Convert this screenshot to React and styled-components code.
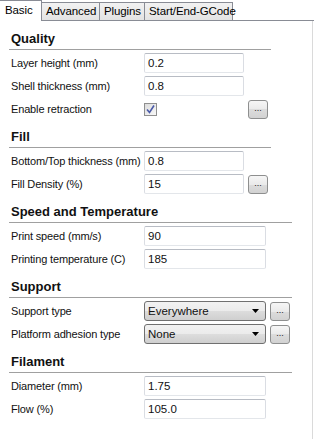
import styled, { createGlobalStyle } from "styled-components";

const Global = createGlobalStyle`
  body {
    margin: 0;
    background: #ffffff;
    font-family: "Liberation Sans", Arial, sans-serif;
    font-size: 11px;
    color: #000;
  }
`;

const Window = styled.div`
  width: 314px;
  height: 439px;
  background: #fff;
  overflow: hidden;
  display: flex;
  flex-direction: column;
`;

const TabBar = styled.div`
  display: flex;
  align-items: flex-end;
  height: 20px;
  border-bottom: 1px solid #898c95;
`;

const Tab = styled.div`
  box-sizing: border-box;
  width: ${(p) => p.w}px;
  height: ${(p) => (p.active ? 21 : 18)}px;
  margin-bottom: ${(p) => (p.active ? -1 : 0)}px;
  padding-left: ${(p) => (p.active ? 5 : 4)}px;
  line-height: ${(p) => (p.active ? 19 : 17)}px;
  background: ${(p) => (p.active ? "#fff" : "linear-gradient(#f2f2f2, #e3e3e3)")};
  border: 1px solid #898c95;
  border-left: ${(p) => (p.active ? "none" : "1px solid #898c95")};
  border-bottom: none;
  margin-left: ${(p) => (p.active ? 0 : -1)}px;
  font-size: 11.5px;
  letter-spacing: -0.1px;
  color: #000;
  white-space: nowrap;
  &:first-child {
    margin-left: 0;
  }
`;

const Panel = styled.div`
  flex: 1;
  padding-left: 9px;
  border-right: 1px solid #dadada;
  margin-right: 1px;
`;

const Section = styled.div`
  width: ${(p) => p.w}px;
  margin-top: 10px;
`;

const Header = styled.div`
  height: 18px;
  line-height: 16px;
  padding-left: 2px;
  font-size: 13px;
  font-weight: bold;
  color: #111;
  border-bottom: 1px solid #a0a0a0;
`;

const Rows = styled.div`
  display: flex;
  flex-direction: column;
  gap: 3px;
  margin-top: 3px;
`;

const Row = styled.div`
  display: flex;
  align-items: center;
  height: 20px;
`;

const Label = styled.div`
  box-sizing: border-box;
  width: 135px;
  padding-left: 2px;
  white-space: nowrap;
  font-size: 11px;
  letter-spacing: -0.15px;
  color: #111;
`;

const TextBox = styled.div`
  box-sizing: border-box;
  width: ${(p) => p.w}px;
  height: 20px;
  line-height: 18px;
  padding-left: 3px;
  border: 1px solid;
  border-color: #b8bcc4 #dadde3 #e3e6ea #dadde3;
  border-radius: 2px;
  background: #fff;
  font-size: 11.5px;
  color: #111;
`;

const Select = styled.div`
  box-sizing: border-box;
  width: 122px;
  height: 20px;
  line-height: 18px;
  padding-left: 3px;
  border: 1px solid #707070;
  border-radius: 3px;
  background: linear-gradient(#f2f2f2 0%, #ebebeb 50%, #dddddd 50%, #cfcfcf 100%);
  font-size: 11.5px;
  color: #111;
  display: flex;
  justify-content: space-between;
  align-items: center;
  padding-right: 6px;
`;

const MoreButton = styled.div`
  box-sizing: border-box;
  width: 20px;
  height: 19px;
  margin-left: 4px;
  border: 1px solid #8e8f8f;
  border-radius: 3px;
  background: linear-gradient(#f6f6f6 0%, #eaeaea 50%, #dcdcdc 50%, #d2d2d2 100%);
  font-size: 9px;
  line-height: 15px;
  text-align: center;
  color: #222;
`;

const CheckCell = styled.div`
  width: 100px;
  display: flex;
  align-items: center;
`;

const Box = styled.div`
  box-sizing: border-box;
  width: 13px;
  height: 13px;
  border: 1px solid #8f8f8f;
  background: linear-gradient(135deg, #dcdcdc, #f8f8f8);
  display: flex;
  align-items: center;
  justify-content: center;
`;

const Arrow = () => (
  <svg width="7" height="4" viewBox="0 0 7 4">
    <path d="M0 0 H7 L3.5 4 Z" fill="#000" />
  </svg>
);

const Check = () => (
  <svg width="11" height="11" viewBox="0 0 11 11">
    <path d="M2 5.5 L4.5 8.5 L9 1.5" fill="none" stroke="#4a5aa8" strokeWidth="1.6" />
  </svg>
);

const Field = ({ label, value, w }) => (
  <Row>
    <Label>{label}</Label>
    <TextBox w={w}>{value}</TextBox>
  </Row>
);

export default function App() {
  return (
    <Window>
      <Global />
      <TabBar>
        <Tab active w={42}>Basic</Tab>
        <Tab w={59}>Advanced</Tab>
        <Tab w={46}>Plugins</Tab>
        <Tab w={89}>Start/End-GCode</Tab>
      </TabBar>
      <Panel>
        <Section w={262}>
          <Header>Quality</Header>
          <Rows>
            <Field label="Layer height (mm)" value="0.2" w={100} />
            <Field label="Shell thickness (mm)" value="0.8" w={100} />
            <Row>
              <Label>Enable retraction</Label>
              <CheckCell>
                <Box>
                  <Check />
                </Box>
              </CheckCell>
              <MoreButton>...</MoreButton>
            </Row>
          </Rows>
        </Section>
        <Section w={262}>
          <Header>Fill</Header>
          <Rows>
            <Field label="Bottom/Top thickness (mm)" value="0.8" w={100} />
            <Row>
              <Label>Fill Density (%)</Label>
              <TextBox w={100}>15</TextBox>
              <MoreButton>...</MoreButton>
            </Row>
          </Rows>
        </Section>
        <Section w={283}>
          <Header>Speed and Temperature</Header>
          <Rows>
            <Field label="Print speed (mm/s)" value="90" w={122} />
            <Field label="Printing temperature (C)" value="185" w={122} />
          </Rows>
        </Section>
        <Section w={283}>
          <Header>Support</Header>
          <Rows>
            <Row>
              <Label>Support type</Label>
              <Select>
                Everywhere
                <Arrow />
              </Select>
              <MoreButton>...</MoreButton>
            </Row>
            <Row>
              <Label>Platform adhesion type</Label>
              <Select>
                None
                <Arrow />
              </Select>
              <MoreButton>...</MoreButton>
            </Row>
          </Rows>
        </Section>
        <Section w={283}>
          <Header>Filament</Header>
          <Rows>
            <Field label="Diameter (mm)" value="1.75" w={122} />
            <Field label="Flow (%)" value="105.0" w={122} />
          </Rows>
        </Section>
      </Panel>
    </Window>
  );
}
